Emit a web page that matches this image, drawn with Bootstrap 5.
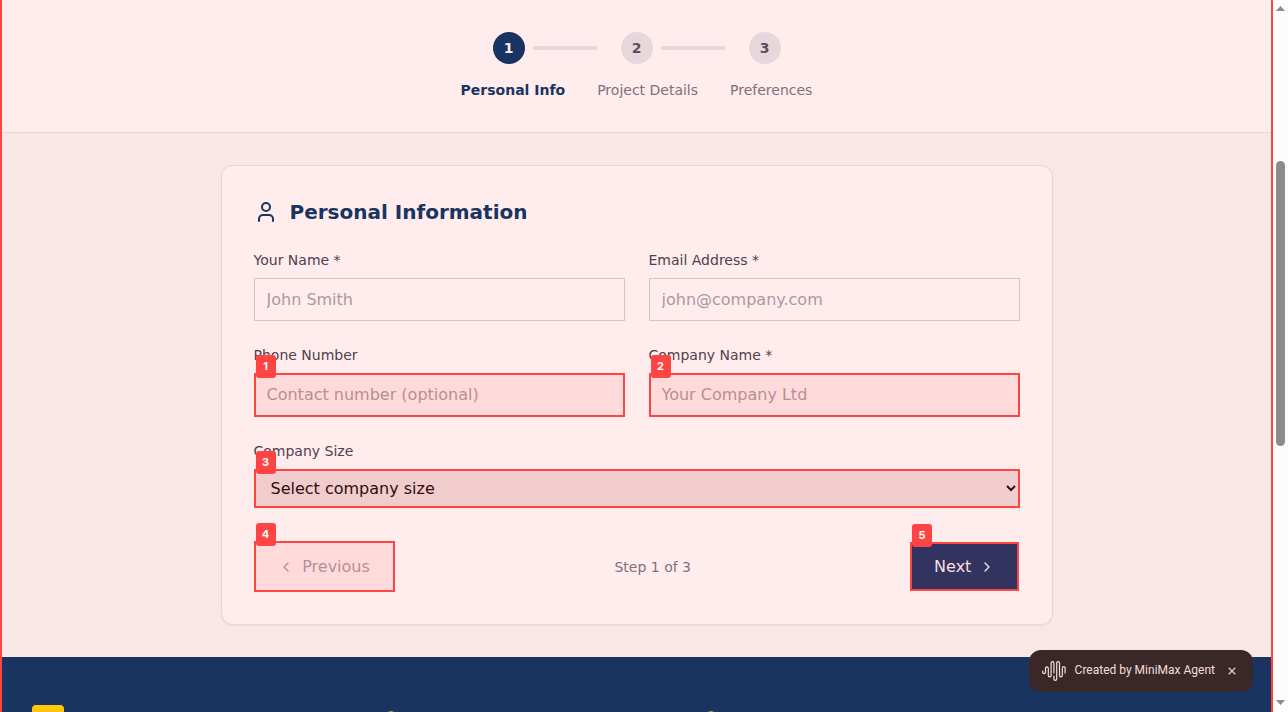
<!DOCTYPE html>
<html lang="en">
<head>
<meta charset="utf-8">
<meta name="viewport" content="width=device-width, initial-scale=1">
<title>Personal Information</title>
<link rel="stylesheet" href="https://cdn.jsdelivr.net/npm/bootstrap@5.3.0/dist/css/bootstrap.min.css">
<style>
:root{--navy:#1a3461;--red:#ff4444;--line:#e7d7db}
body{font-family:"DejaVu Sans",sans-serif;height:712px;overflow:hidden;background:#fcfcfc;color:#50404f}
.page{width:1273px;height:712px;border-left:2px solid var(--red);border-right:2px solid var(--red);background:#f9e7e6}
.stepper{height:133px;background:#ffecec;border-bottom:1px solid var(--line);padding-top:32px;font-size:14px;line-height:20px;color:#80707e}
.dot{width:32px;height:32px;background:var(--line);color:#5c4d5e;font-weight:600}
.dot.on{background:var(--navy);color:#ffecec}
.bar{width:64px;height:4px;background:var(--line);margin:0 24px 0 8px}
.labels{gap:32px;margin-top:16px}
.on-label{color:var(--navy);font-weight:600}
.main-area{height:524px;padding-top:32px}
.panel{width:832px;height:460px;padding:32px;background:#ffecec;border:1px solid var(--line);border-radius:12px;box-shadow:0 1px 2px rgba(80,0,0,.07)}
.panel h2{font-size:20px;line-height:28px;font-weight:600;color:var(--navy);margin:0 0 24px;gap:12px}
.fields{display:grid;grid-template-columns:1fr 1fr;column-gap:24px;row-gap:24px}
.fields label{display:block;font-size:14px;line-height:20px;margin-bottom:8px}
.field{height:43.33px;border:1px solid #d7c4c9;border-radius:0;background:transparent;padding:0 12px;font-size:16px;line-height:24px;width:100%;display:block;color:#50404f}
.field::placeholder{color:#ab99a5;opacity:1}
.marked{border:2px solid var(--red);background:#ffdada}
.marked.field{padding:0 11px}
.marked.field::placeholder{color:#b48f99}
select.size{appearance:auto;height:39px;background:#f0cccc;color:#300b12;padding:0 0 0 12px;font-size:16px;width:100%;display:block;border:1px solid var(--red);box-shadow:inset 0 0 0 1px var(--red);border-radius:0}
.tag{position:absolute;left:2px;top:-18px;width:20px;height:23px;border-radius:3px;background:var(--red);color:#fff;font:bold 11px/23px Inter,sans-serif;text-align:center;z-index:2}
.act{border-radius:0;padding:1px 0 0;font-size:16px;line-height:24px;gap:8px}
.prev{width:141px;height:51px;color:#b48f99}
.next{width:109.5px;height:49px;background:#32335e;color:#f8dfe1;padding-top:2px}
.step-note{font-size:14px;line-height:20px;color:#80707e;padding:2px 0 0 1px}
.foot{height:55px;background:var(--navy);padding:48px 30px 0;overflow:hidden}
.logo-tile{width:32px;height:32px;border-radius:4px;background:#ffc908}
.foot .pin{width:16px;height:16px;margin-top:5px}
.agent{position:absolute;left:1029px;top:650px;width:224px;height:42px;border-radius:12px;background:#3a2828;color:#f3dddd;font:12px/16px Roboto,sans-serif;padding-left:13px}
.agent span{margin-left:7.6px;padding-bottom:2px}
.track{position:absolute;right:0;top:0;width:15px;height:712px}
</style>
</head>
<body class="position-relative">
<div class="page">
  <header class="stepper">
    <div class="d-flex justify-content-center align-items-center">
      <div class="dot on rounded-circle d-flex align-items-center justify-content-center">1</div><div class="bar"></div>
      <div class="dot rounded-circle d-flex align-items-center justify-content-center">2</div><div class="bar"></div>
      <div class="dot rounded-circle d-flex align-items-center justify-content-center">3</div>
    </div>
    <div class="labels d-flex justify-content-center"><span class="on-label">Personal Info</span><span>Project Details</span><span>Preferences</span></div>
  </header>
  <main class="main-area">
    <section class="panel mx-auto">
      <h2 class="d-flex align-items-center"><svg width="24" height="24" viewBox="0 0 24 24" fill="none" stroke="currentColor" stroke-width="2" stroke-linecap="round" stroke-linejoin="round"><path d="M19 21v-2a4 4 0 0 0-4-4H9a4 4 0 0 0-4 4v2"/><circle cx="12" cy="7" r="4"/></svg>Personal Information</h2>
      <form>
        <div class="fields">
          <div><label for="n">Your Name *</label><input id="n" class="field" placeholder="John Smith"></div>
          <div><label for="e">Email Address *</label><input id="e" class="field" placeholder="john@company.com"></div>
          <div><label for="p">Phone Number</label><div class="position-relative"><span class="tag">1</span><input id="p" class="field marked" placeholder="Contact number (optional)"></div></div>
          <div><label for="c">Company Name *</label><div class="position-relative"><span class="tag">2</span><input id="c" class="field marked" placeholder="Your Company Ltd"></div></div>
        </div>
        <div class="fields mt-4 d-block"><label for="s">Company Size</label><div class="position-relative"><span class="tag">3</span><select id="s" class="size"><option>Select company size</option></select></div></div>
        <div class="d-flex justify-content-between align-items-center" style="margin-top:33px">
          <div class="position-relative"><span class="tag">4</span><button type="button" class="marked act prev d-flex align-items-center justify-content-center"><svg width="16" height="16" viewBox="0 0 24 24" fill="none" stroke="currentColor" stroke-width="2" stroke-linecap="round" stroke-linejoin="round"><path d="m15 18-6-6 6-6"/></svg>Previous</button></div>
          <span class="step-note">Step 1 of 3</span>
          <div class="position-relative"><span class="tag">5</span><button type="button" class="marked act next d-flex align-items-center justify-content-center"><span>Next</span><svg width="16" height="16" viewBox="0 0 24 24" fill="none" stroke="currentColor" stroke-width="2" stroke-linecap="round" stroke-linejoin="round"><path d="m9 18 6-6-6-6"/></svg></button></div>
        </div>
      </form>
    </section>
  </main>
  <footer class="foot d-flex">
    <div class="logo-tile"></div>
    <svg class="pin" style="margin-left:319px" viewBox="0 0 16 16" fill="none" stroke="#ffc908" stroke-width="1.33"><circle cx="8" cy="8.2" r="6.2"/></svg>
    <svg class="pin" style="margin-left:304px" viewBox="0 0 16 16" fill="none" stroke="#ffc908" stroke-width="1.33"><circle cx="8" cy="8.2" r="6.2"/></svg>
  </footer>
</div>
<aside class="agent d-flex align-items-center">
  <svg width="25" height="22" viewBox="0 0 25 22" fill="none" stroke="currentColor" stroke-width="1.2" stroke-linecap="round" stroke-linejoin="round"><path d="M.7 11v1.2a1.4 1.4 0 0 0 2.8 0V8.3a1.4 1.4 0 0 1 2.8 0v7.2a1.4 1.4 0 0 0 2.8 0V3a1.4 1.4 0 0 1 2.8 0v10M11.9 16v3a1.4 1.4 0 0 0 2.8 0V3a1.4 1.4 0 0 1 2.8 0v12.5a1.4 1.4 0 0 0 2.8 0V8a1.4 1.4 0 0 1 2.8 0v5"/></svg>
  <span>Created by MiniMax Agent</span>
  <svg style="margin-left:13.4px" width="8" height="8" viewBox="0 0 8 8" stroke="#d3bdbd" stroke-width="1.5"><path d="M.7.7l6.6 6.6M7.3.7.7 7.3"/></svg>
</aside>
<svg class="track" viewBox="0 0 15 712" fill="#8b8b8b"><path d="M3 11h9L7.5 6zM3 700h9l-4.5 5z"/><rect x="3" y="161" width="9" height="285" rx="4.5"/></svg>
<script src="https://cdn.jsdelivr.net/npm/bootstrap@5.3.0/dist/js/bootstrap.bundle.min.js"></script>
</body>
</html>
